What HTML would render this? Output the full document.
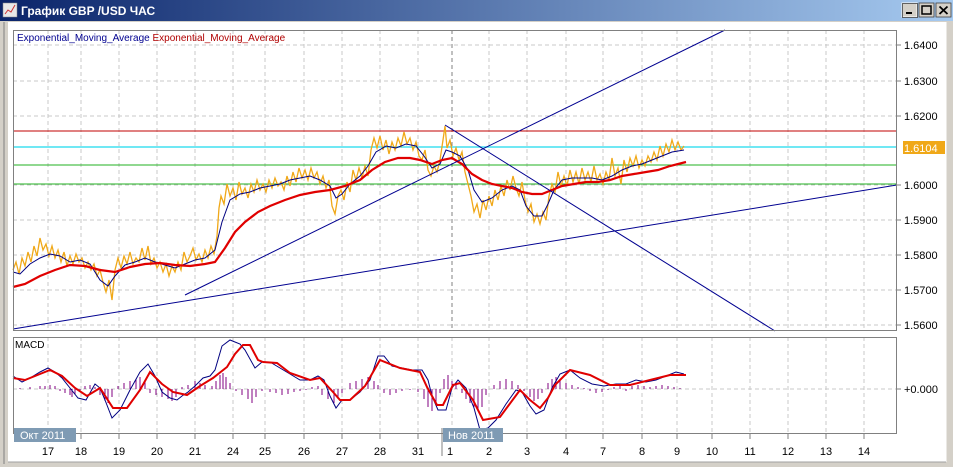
<!DOCTYPE html>
<html><head><meta charset="utf-8"><style>
html,body{margin:0;padding:0;width:953px;height:467px;overflow:hidden;background:#d4d0c8;}
svg{display:block;font-family:"Liberation Sans","DejaVu Sans",sans-serif;}
</style></head><body>
<svg width="953" height="467" viewBox="0 0 953 467" xmlns="http://www.w3.org/2000/svg">
<defs>
<linearGradient id="tb" x1="0" x2="1" y1="0" y2="0">
<stop offset="0" stop-color="#0a246a"/><stop offset="1" stop-color="#a6caf0"/>
</linearGradient>
</defs>
<rect x="0" y="0" width="953" height="467" fill="#d4d0c8"/>
<rect x="0" y="0" width="953" height="21" fill="url(#tb)"/>
<rect x="3" y="3" width="14" height="14" fill="#e8e8e8" stroke="#888" stroke-width="0.5"/>
<polyline points="5,14 8,10 11,12 15,5" fill="none" stroke="#c33" stroke-width="1"/>
<text x="21" y="15" fill="#fff" font-size="12" font-weight="bold">График GBP /USD  ЧАС</text>
<g font-size="12" font-weight="bold">
<rect x="902" y="3" width="15" height="14" fill="#d4d0c8" stroke="#fff" stroke-width="1"/><rect x="902.5" y="3.5" width="15" height="14" fill="none" stroke="#404040" stroke-width="0.8"/>
<rect x="906" y="12" width="6" height="2" fill="#000"/>
<rect x="919" y="3" width="15" height="14" fill="#d4d0c8" stroke="#404040" stroke-width="0.8"/>
<rect x="922" y="6" width="9" height="8" fill="none" stroke="#000" stroke-width="1.5"/>
<rect x="936" y="3" width="15" height="14" fill="#d4d0c8" stroke="#404040" stroke-width="0.8"/>
<path d="M939.5 6.5 L947.5 14 M947.5 6.5 L939.5 14" stroke="#000" stroke-width="1.8"/>
</g>
<rect x="8" y="22" width="938" height="440" fill="#fff"/>
<line x1="4" y1="22" x2="4" y2="464" stroke="#808080"/>
<line x1="946" y1="22" x2="946" y2="462" stroke="#fff"/>
<line x1="8" y1="462" x2="946" y2="462" stroke="#a0a0a0"/>

<g stroke="#c8c8c8" stroke-dasharray="4,3" stroke-width="1" shape-rendering="crispEdges">
<path d="M48 30V331M81 30V331M119 30V331M157 30V331M195 30V331M233 30V331M265 30V331M304 30V331M342 30V331M380 30V331M418 30V331M489 30V331M527 30V331M566 30V331M603 30V331M642 30V331M677 30V331M712 30V331M750 30V331M788 30V331M826 30V331M864 30V331"/>
<path d="M48 337V434M81 337V434M119 337V434M157 337V434M195 337V434M233 337V434M265 337V434M304 337V434M342 337V434M380 337V434M418 337V434M452 337V434M489 337V434M527 337V434M566 337V434M603 337V434M642 337V434M677 337V434M712 337V434M750 337V434M788 337V434M826 337V434M864 337V434"/>
<path d="M13 45H902M13 81H902M13 116H902M13 185H902M13 220H902M13 255H902M13 290H902M13 325H902M13 389H902"/>
</g>
<line x1="452" y1="30" x2="452" y2="331" stroke="#808080" stroke-dasharray="4,3"/>

<line x1="13" y1="131" x2="897" y2="131" stroke="#c00000"/>
<line x1="13" y1="147" x2="897" y2="147" stroke="#40e0f0" stroke-width="1.5"/>
<line x1="13" y1="165" x2="897" y2="165" stroke="#20b020"/>
<line x1="13" y1="184" x2="897" y2="184" stroke="#20b020"/>

<polyline fill="none" stroke="#f0a818" stroke-width="1.3" points="13,270 16,262 19,274 22,258 25,266 28,252 31,262 34,246 37,256 40,238 43,250 46,244 49,256 52,246 55,258 58,250 61,262 64,252 67,266 70,256 73,264 76,254 79,262 82,258 85,268 88,262 91,270 94,264 97,276 100,270 103,282 106,292 109,280 112,300 115,270 118,258 121,268 124,256 127,264 130,252 133,264 136,258 139,262 142,248 145,260 148,246 151,264 154,258 157,268 160,262 163,272 166,264 169,276 172,266 175,272 178,262 181,270 184,252 187,262 190,256 193,248 196,260 199,254 202,262 205,250 208,258 211,246 214,254 217,236 219,208 221,196 224,204 227,184 230,196 233,188 236,200 239,182 242,194 245,188 248,198 251,184 254,192 257,180 260,190 263,184 266,192 269,180 272,188 275,178 278,186 281,182 284,190 287,176 290,186 293,172 296,182 299,168 302,178 305,170 308,180 311,168 314,178 317,172 320,184 323,176 326,188 329,180 332,206 335,214 338,196 341,190 344,200 347,182 350,192 353,170 356,180 359,168 362,178 365,166 368,176 371,150 374,138 377,148 380,136 383,150 386,140 389,154 392,142 395,150 398,138 401,146 404,132 407,144 410,138 413,150 416,142 419,156 422,160 425,150 428,170 431,176 434,166 437,172 440,160 443,140 445,126 447,148 450,140 453,156 456,148 459,160 462,152 465,172 468,184 471,196 474,212 477,204 480,218 483,200 486,210 489,196 492,206 495,190 498,200 501,186 504,196 507,180 510,190 513,176 516,188 519,196 522,182 525,200 528,212 531,204 534,222 537,214 540,224 543,212 546,220 549,196 552,184 555,192 558,172 561,186 564,176 567,186 570,170 573,182 576,172 579,184 582,168 585,180 588,172 591,182 594,166 597,180 600,174 603,184 606,172 609,180 612,158 615,176 618,168 621,184 624,160 627,172 630,158 633,166 636,156 639,168 642,160 645,166 648,156 651,162 654,152 657,160 660,146 663,156 666,144 669,152 672,140 675,150 678,142 681,150 684,146"/>
<polyline fill="none" stroke="#000080" stroke-width="1" points="13,272 20,274 30,264 40,258 50,254 60,256 70,262 80,260 90,264 100,280 108,286 115,276 125,265 135,262 145,258 155,262 165,265 175,268 185,264 195,260 205,258 215,250 222,222 230,200 240,194 250,192 260,188 270,186 280,184 290,180 300,178 310,176 320,180 330,186 336,198 342,194 350,184 360,176 368,166 376,152 386,146 396,148 406,144 416,146 424,156 432,168 440,164 446,150 452,152 460,156 468,170 474,190 482,202 492,198 502,190 512,186 520,190 526,206 534,216 542,216 548,204 554,190 562,180 572,178 582,178 592,178 602,180 612,176 622,170 632,166 642,164 652,160 662,156 672,152 684,150"/>
<polyline fill="none" stroke="#e00000" stroke-width="2.2" points="13,287 25,284 40,276 55,270 70,265 85,266 100,270 115,272 130,267 145,264 160,263 175,265 190,266 205,264 215,262 225,248 235,232 245,222 258,212 270,206 285,200 300,195 315,192 330,190 345,186 360,180 372,170 385,162 398,158 410,158 420,160 432,164 442,160 452,158 462,164 472,174 482,180 492,184 502,186 512,188 522,192 532,194 542,194 552,190 562,186 574,184 586,182 598,182 610,180 622,176 634,174 646,172 658,170 670,166 686,162"/>

<g stroke="#000090" stroke-width="1" fill="none">
<line x1="13" y1="329" x2="897" y2="185"/>
<line x1="185" y1="295" x2="725" y2="30"/>
<line x1="445" y1="125" x2="775" y2="331"/>
</g>

<rect x="13.5" y="30.5" width="883" height="300" fill="none" stroke="#808080"/>
<g stroke="#808080"><path d="M897 45h4M897 81h4M897 116h4M897 185h4M897 220h4M897 255h4M897 290h4M897 325h4M897 389h4"/></g>
<text x="17" y="41" font-size="10" fill="#000090">Exponential_Moving_Average <tspan fill="#b00000">Exponential_Moving_Average</tspan></text>

<g font-size="11" fill="#000">
<text x="904" y="49">1.6400</text><text x="904" y="85">1.6300</text><text x="904" y="120">1.6200</text>
<text x="904" y="189">1.6000</text><text x="904" y="224">1.5900</text><text x="904" y="259">1.5800</text>
<text x="904" y="294">1.5700</text><text x="904" y="329">1.5600</text><text x="904" y="393">+0.000</text>
</g>
<rect x="903" y="141" width="42" height="13" fill="#f0a818"/>
<text x="904" y="152" font-size="11" fill="#fff">1.6104</text>

<g stroke="#800080" stroke-width="1" shape-rendering="crispEdges">
<path d="M20 389v-1M30 389v-2M40 389v-3M45 389v-3M50 389v-4M55 389v-3M60 389v2M65 389v4M70 389v6M72 389v8M75 389v5M80 389v2M85 389v-3M90 389v-4M95 389v-2M100 389v6M105 389v12M108 389v14M112 389v8M118 389v-3M124 389v-6M130 389v-8M136 389v-10M140 389v-12M145 389v-8M150 389v4M156 389v6M162 389v8M168 389v10M172 389v12M176 389v8M182 389v-2M188 389v-4M195 389v-8M200 389v-6M205 389v-4M212 389v-3M216 389v-8M220 389v-14M223 389v-16M226 389v-12M230 389v-6M236 389v2M242 389v6M248 389v10M252 389v14M256 389v8M262 389v2M270 389v3M276 389v4M282 389v6M288 389v5M294 389v3M300 389v2M306 389v1M312 389v-2M318 389v-3M322 389v6M328 389v10M334 389v14M338 389v10M342 389v4M350 389v-6M356 389v-8M362 389v-10M368 389v-12M374 389v-8M378 389v-4M384 389v4M390 389v6M396 389v4M402 389v2M410 389v1M418 389v3M424 389v10M428 389v18M432 389v22M436 389v14M440 389v4M444 389v-10M448 389v-14M452 389v-8M456 389v-4M462 389v4M466 389v10M470 389v14M474 389v18M478 389v22M482 389v18M486 389v6M494 389v-4M500 389v-8M506 389v-10M512 389v-8M518 389v-4M524 389v2M530 389v8M534 389v12M538 389v10M542 389v4M548 389v-6M552 389v-10M556 389v-12M560 389v-10M566 389v-6M572 389v-4M578 389v-2M584 389v-1M590 389v2M596 389v4M602 389v3M608 389v1M614 389v-2M620 389v-3M626 389v2M632 389v-3M638 389v-4M644 389v-3M650 389v-2M656 389v-3M662 389v-4M668 389v-3M674 389v-2M680 389v-1"/>
</g>
<polyline fill="none" stroke="#000080" stroke-width="1" points="13,376 22,382 30,378 40,372 48,368 55,372 62,378 70,388 78,398 86,400 95,384 100,388 105,400 112,418 120,410 130,390 140,372 148,364 155,376 162,392 170,398 177,400 182,396 188,392 195,386 203,378 210,376 215,370 222,346 230,340 240,344 245,350 255,368 262,362 270,362 280,368 290,374 300,380 310,380 318,376 324,380 330,396 336,408 342,400 350,400 360,392 370,380 378,356 384,356 392,366 402,368 412,370 422,370 428,380 432,396 438,410 446,410 452,388 458,380 466,388 474,408 480,430 488,428 496,420 506,404 516,390 522,392 530,406 536,414 544,410 552,388 560,374 570,370 580,378 592,384 604,386 616,384 626,384 636,380 646,382 656,380 666,376 676,372 684,374"/>
<polyline fill="none" stroke="#e00000" stroke-width="2" points="13,378 25,380 40,374 50,370 62,376 75,388 87,396 100,388 113,408 127,408 140,390 150,372 162,384 173,392 187,395 200,386 213,378 227,367 235,354 243,345 250,345 258,360 263,362 277,363 290,373 310,380 320,378 333,392 340,400 350,400 365,386 380,360 400,368 420,372 427,387 437,405 443,405 453,385 460,383 473,400 483,420 500,417 520,390 530,400 540,408 548,398 555,385 570,370 590,375 610,385 630,385 650,380 670,375 686,375"/>
<rect x="13.5" y="337.5" width="883" height="96" fill="none" stroke="#808080"/>
<text x="15" y="348" font-size="10" fill="#000">MACD</text>

<g stroke="#808080"><path d="M48 434v5M81 434v5M119 434v5M157 434v5M195 434v5M233 434v5M265 434v5M304 434v5M342 434v5M380 434v5M418 434v5M489 434v5M527 434v5M566 434v5M603 434v5M642 434v5M677 434v5M712 434v5M750 434v5M788 434v5M826 434v5M864 434v5"/><path d="M442 428v28"/></g>
<rect x="14" y="428" width="62" height="14" fill="#7f9bb4"/>
<text x="20" y="439" font-size="11" fill="#fff">Окт 2011</text>
<rect x="443" y="428" width="60" height="14" fill="#7f9bb4"/>
<text x="448" y="439" font-size="11" fill="#fff">Нов 2011</text>
<g font-size="11" fill="#000" text-anchor="middle">
<text x="48" y="455">17</text><text x="81" y="455">18</text><text x="119" y="455">19</text><text x="157" y="455">20</text>
<text x="195" y="455">21</text><text x="233" y="455">24</text><text x="265" y="455">25</text><text x="304" y="455">26</text>
<text x="342" y="455">27</text><text x="380" y="455">28</text><text x="418" y="455">31</text><text x="450" y="455">1</text>
<text x="489" y="455">2</text><text x="527" y="455">3</text><text x="566" y="455">4</text><text x="603" y="455">7</text>
<text x="642" y="455">8</text><text x="677" y="455">9</text><text x="712" y="455">10</text><text x="750" y="455">11</text>
<text x="788" y="455">12</text><text x="826" y="455">13</text><text x="864" y="455">14</text>
</g>
</svg>
</body></html>
